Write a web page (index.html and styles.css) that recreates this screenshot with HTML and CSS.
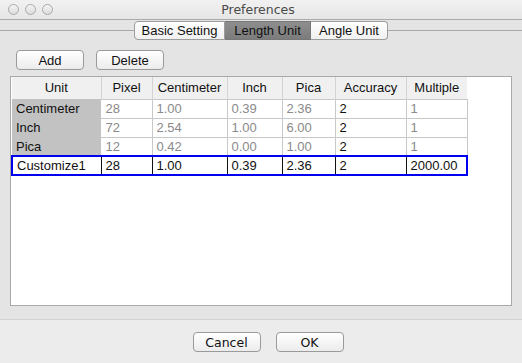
FILE: index.html
```html
<!DOCTYPE html>
<html lang="en">
<head>
    <meta charset="UTF-8">
    <title>Preferences</title>
    <link rel="stylesheet" href="styles.css">
</head>
<body>
    <div class="window">
        <div class="titlebar">
            <div class="lights">
                <span class="light"></span>
                <span class="light"></span>
                <span class="light"></span>
            </div>
            <p class="title">Preferences</p>
        </div>
        <div class="content">
            <div class="tabs">
                <button class="tab t-basic">Basic Setting</button>
                <button class="tab t-length active">Length Unit</button>
                <button class="tab t-angle">Angle Unit</button>
            </div>
            <div class="toolbar">
                <button class="btn">Add</button>
                <button class="btn">Delete</button>
            </div>
            <div class="panel">
                <table class="grid">
                    <thead>
                        <tr>
                            <th class="c-unit">Unit</th>
                            <th class="c-px">Pixel</th>
                            <th class="c-cm">Centimeter</th>
                            <th class="c-in">Inch</th>
                            <th class="c-pica">Pica</th>
                            <th class="c-acc">Accuracy</th>
                            <th class="c-mul">Multiple</th>
                        </tr>
                    </thead>
                    <tbody>
                        <tr class="fixed">
                            <td class="name">Centimeter</td>
                            <td>28</td><td>1.00</td><td>0.39</td><td>2.36</td>
                            <td class="on">2</td><td>1</td>
                        </tr>
                        <tr class="fixed">
                            <td class="name">Inch</td>
                            <td>72</td><td>2.54</td><td>1.00</td><td>6.00</td>
                            <td class="on">2</td><td>1</td>
                        </tr>
                        <tr class="fixed">
                            <td class="name">Pica</td>
                            <td>12</td><td>0.42</td><td>0.00</td><td>1.00</td>
                            <td class="on">2</td><td>1</td>
                        </tr>
                        <tr class="custom">
                            <td>Customize1</td>
                            <td>28</td><td>1.00</td><td>0.39</td><td>2.36</td>
                            <td>2</td><td>2000.00</td>
                        </tr>
                    </tbody>
                </table>
            </div>
        </div>
        <div class="footer">
            <button class="btn wide">Cancel</button>
            <button class="btn wide">OK</button>
        </div>
    </div>
</body>
</html>
```

FILE: styles.css
```css
* {
    margin: 0;
    padding: 0;
    box-sizing: border-box;
}
body {
    width: 522px;
    height: 363px;
    overflow: hidden;
    font-family: "Liberation Sans", Arial, sans-serif;
    font-size: 13px;
    background-color: #ececec;
}
.window {
    display: flex;
    flex-direction: column;
    height: 363px;
}
.titlebar {
    height: 20px;
    display: flex;
    align-items: center;
    background: linear-gradient(#f1f1f1, #e6e6e6);
    border-bottom: 1px solid #aaaaaa;
    padding-left: 8px;
}
.lights {
    display: flex;
    gap: 6px;
}
.light {
    width: 11px;
    height: 11px;
    border-radius: 50%;
    border: 1px solid #a9a9a9;
    background: linear-gradient(#f4f4f4, #dcdcdc);
}
.title {
    flex: 1;
    text-align: center;
    margin-right: 59px;
    font-family: "DejaVu Sans", sans-serif;
    font-size: 12.5px;
    color: #4a4a4a;
}
.content {
    height: 300px;
    background-color: #e4e4e4;
    border-bottom: 1px solid #d2d2d2;
    padding: 1px 10px 0 10px;
}
.tabs {
    display: flex;
    justify-content: center;
    position: relative;
    margin: 0 -10px;
}
.tabs::before {
    content: "";
    position: absolute;
    left: 0;
    right: 0;
    top: 9px;
    border-top: 1px solid #a8a8a8;
}
.tab {
    position: relative;
    height: 19px;
    padding: 0;
    font-family: "Liberation Sans", Arial, sans-serif;
    font-size: 13px;
    color: #111;
    background: linear-gradient(#ffffff, #f0f0f0);
    border: 1px solid #9c9c9c;
    border-left: none;
}
.t-basic {
    width: 91px;
}
.t-length {
    width: 86px;
}
.t-angle {
    width: 77px;
}
.tab:first-child {
    border-left: 1px solid #9c9c9c;
    border-radius: 4px 0 0 4px;
}
.tab:last-child {
    border-radius: 0 4px 4px 0;
}
.tab.active {
    background: linear-gradient(#8e8e8e, #7c7c7c);
    border-color: #777;
}
.toolbar {
    display: flex;
    gap: 12px;
    padding: 10px 0 0 6px;
    height: 36px;
}
.btn {
    width: 68px;
    height: 20px;
    font-family: "Liberation Sans", Arial, sans-serif;
    font-size: 13px;
    color: #111;
    background: linear-gradient(#ffffff, #ececec);
    border: 1px solid #9a9a9a;
    border-radius: 4px;
}
.panel {
    height: 230px;
    background-color: #ffffff;
    border: 1px solid #a9a9a9;
}
.grid {
    border-collapse: collapse;
    table-layout: fixed;
    width: 455px;
}
.grid th {
    height: 22px;
    font-weight: normal;
    background-color: #f0f0f0;
    border-right: 1px solid #d4d4d4;
    color: #111;
    text-align: center;
}
.grid th:last-child {
    border-right: none;
}
.grid td {
    height: 19px;
    padding: 0 4px;
    border: 1px solid #c8c8c8;
    color: #8a8a8a;
    white-space: nowrap;
}
.grid td:first-child {
    border-left: none;
}
.c-unit { width: 89px; }
.c-px { width: 51px; }
.c-cm { width: 75px; }
.c-in { width: 55px; }
.c-pica { width: 53px; }
.c-acc { width: 71px; }
.c-mul { width: 61px; }
.fixed .name {
    background-color: #c2c2c2;
    color: #111;
    border-color: #c2c2c2 #ffffff;
}
.grid td.on {
    color: #111;
}
.custom td {
    color: #111;
    border-top: 2px solid #0000f0;
    border-bottom: 2px solid #0000f0;
    border-right: 1px solid #111;
}
.custom td:first-child {
    border-left: 2px solid #0000f0;
}
.custom td:last-child {
    border-right: 2px solid #0000f0;
}
.footer {
    flex: 1;
    display: flex;
    justify-content: center;
    align-items: center;
    gap: 15px;
    padding: 1px 0 0 14px;
}
.btn.wide {
    font-family: "DejaVu Sans", sans-serif;
    font-size: 12.5px;
}
```
